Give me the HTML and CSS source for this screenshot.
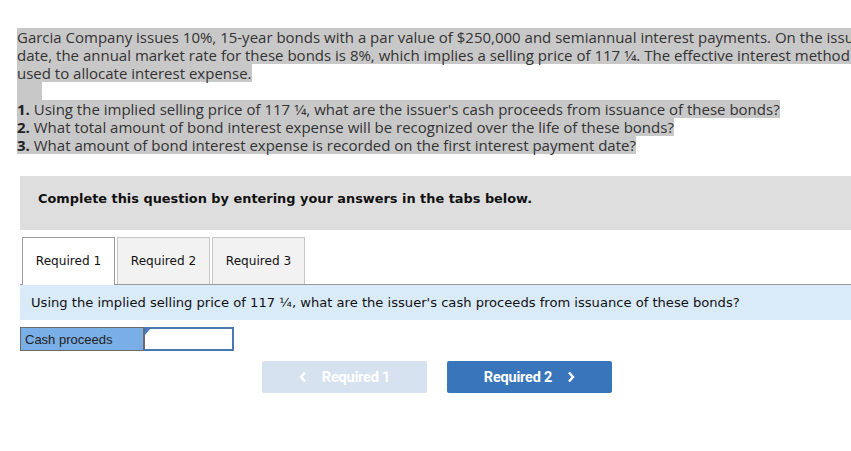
FILE: index.html
```html
<!DOCTYPE html>
<html>
<head>
<meta charset="utf-8">
<link rel="stylesheet" href="styles.css">
</head>
<body>
<div class="page">
  <div class="problem">
    <div class="hl">Garcia Company issues 10%, 15-year bonds with a par value of $250,000 and semiannual interest payments. On the issue</div>
    <div class="hl">date, the annual market rate for these bonds is 8%, which implies a selling price of 117 1⁄4. The effective interest method is</div>
    <div class="hl">used to allocate interest expense. </div>
    <div class="hl blank"></div>
    <div class="hl"><b>1.</b> Using the implied selling price of 117 1⁄4, what are the issuer's cash proceeds from issuance of these bonds?</div>
    <div class="hl"><b>2.</b> What total amount of bond interest expense will be recognized over the life of these bonds?</div>
    <div class="hl"><b>3.</b> What amount of bond interest expense is recorded on the first interest payment date?</div>
  </div>

  <div class="work">
    <div class="instruct">Complete this question by entering your answers in the tabs below.</div>
    <div class="tabs">
      <div class="tab active">Required 1</div>
      <div class="tab">Required 2</div>
      <div class="tab">Required 3</div>
    </div>
    <div class="prompt">Using the implied selling price of 117 ¼, what are the issuer's cash proceeds from issuance of these bonds?</div>
    <div class="answer">
      <div class="label">Cash proceeds</div>
      <div class="input"><span class="corner"></span></div>
    </div>
    <div class="nav">
      <div class="btn disabled"><svg class="chev left" width="8" height="12" viewBox="0 0 8 12"><polyline points="6,1.5 2,6 6,10.5" fill="none" stroke="#fff" stroke-width="2.4"/></svg>Required 1</div>
      <div class="btn primary">Required 2<svg class="chev right" width="8" height="12" viewBox="0 0 8 12"><polyline points="2,1.5 6,6 2,10.5" fill="none" stroke="#fff" stroke-width="2.4"/></svg></div>
    </div>
  </div>
</div>
</body>
</html>
```

FILE: styles.css
```css
html, body {
  margin: 0;
  padding: 0;
  background: #fff;
  overflow: hidden;
}
.page {
  width: 851px;
  height: 451px;
  overflow: hidden;
  padding: 28px 0 0 17px;
  box-sizing: border-box;
}
.problem {
  font-family: "Open Sans", "Lato", sans-serif;
  font-size: 15px;
  line-height: 18px;
  color: #333;
}
.hl {
  background: #c8c8c8;
  width: fit-content;
  white-space: nowrap;
  height: 18px;
}
.hl b {
  font-weight: 700;
  color: #222;
}
.blank {
  width: 25px;
}
.work {
  margin-left: 3px;
  margin-top: 22px;
}
.instruct {
  background: #dedede;
  height: 54px;
  width: 860px;
  box-sizing: border-box;
  padding-left: 18px;
  padding-bottom: 10px;
  display: flex;
  align-items: center;
  font-family: "DejaVu Sans", Verdana, sans-serif;
  font-weight: 700;
  font-size: 12.9px;
  color: #111;
}
.tabs {
  display: flex;
  gap: 2px;
  margin-top: 7px;
  margin-left: 2px;
  height: 47px;
  position: relative;
  z-index: 1;
}
.tab {
  width: 93px;
  height: 47px;
  box-sizing: border-box;
  border: 1px solid #c6c6c6;
  border-bottom: none;
  background: #f2f2f2;
  display: flex;
  align-items: center;
  justify-content: center;
  font-family: "DejaVu Sans", Verdana, sans-serif;
  font-size: 12.1px;
  color: #111;
  padding-bottom: 1px;
}
.tab.active {
  background: #fff;
  border-color: #999;
  height: 48px;
}
.prompt {
  background: #d9eaf8;
  border-top: 1px solid #999;
  width: 860px;
  height: 36px;
  box-sizing: border-box;
  padding-left: 11px;
  padding-bottom: 1px;
  display: flex;
  align-items: center;
  font-family: "DejaVu Sans", Verdana, sans-serif;
  font-size: 13.1px;
  color: #111;
}
.answer {
  display: flex;
  margin-top: 7px;
  height: 24px;
}
.label {
  width: 123px;
  box-sizing: border-box;
  background: #7aaee6;
  border: 1px solid #6a6a6a;
  border-right: none;
  font-family: "Liberation Sans", Arial, sans-serif;
  font-size: 13px;
  color: #222;
  padding-left: 4px;
  display: flex;
  align-items: center;
}
.input {
  width: 91px;
  box-sizing: border-box;
  border: 2px solid #4a79b1;
  border-left: 2px solid #6a6a6a;
  background: #fff;
  position: relative;
}
.corner {
  position: absolute;
  left: 0;
  top: 0;
  width: 0;
  height: 0;
  border-top: 6px solid #3d7fd0;
  border-right: 5px solid transparent;
}
.nav {
  display: flex;
  gap: 20px;
  margin-top: 10px;
  margin-left: 242px;
}
.btn {
  width: 165px;
  height: 32px;
  border-radius: 2px;
  display: flex;
  align-items: center;
  justify-content: center;
  font-family: "Roboto", "Liberation Sans", sans-serif;
  font-weight: 700;
  font-size: 14.5px;
  color: #fff;
  letter-spacing: -0.2px;
}
.btn.disabled {
  background: #d6e2f0;
}
.btn.primary {
  background: #3875ba;
}
.chev.left {
  margin-right: 15px;
}
.chev.right {
  margin-left: 15px;
}
```
